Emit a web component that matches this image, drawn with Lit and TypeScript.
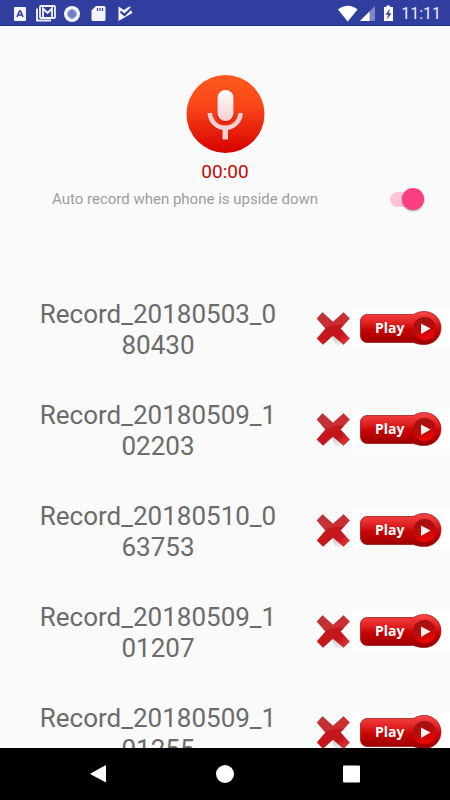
import { LitElement, html, css } from "lit";
import { customElement, property, state } from "lit/decorators.js";

@customElement("status-bar")
class StatusBar extends LitElement {
  static styles = css`
    :host {
      display: flex;
      align-items: center;
      justify-content: space-between;
      box-sizing: border-box;
      height: 26px;
      padding: 0 9px 0 10px;
      background: #303f9f;
      border-bottom: 1px solid #1d2b8c;
      color: #e9ebf6;
      font: 16px/24px Roboto, sans-serif;
    }
    .group { display: flex; align-items: center; }
    svg { display: block; }
    .time { margin-left: 6px; padding-top: 2px; }
  `;
  render() {
    return html`
      <div class="group">
        <svg width="130" height="24" viewBox="0 0 130 24" aria-hidden="true">
          <rect x="4" y="6" width="12" height="14" rx="1" fill="#f4f5fb" />
          <path d="M7 16 L9.5 10 H10.5 L13 16 M8 14 H12" fill="none" stroke="#303f9f" stroke-width="1.5" />
          <path d="M27 7.500 V19.500 H41" fill="none" stroke="#e9ebf6" stroke-width="2" />
          <rect x="30" y="5" width="15" height="12" rx="1" fill="none" stroke="#f4f5fb" stroke-width="1.800" />
          <path d="M33 17 V7.500 L37.500 12 L42 7.500 V17" fill="none" stroke="#f4f5fb" stroke-width="1.800" />
          <circle cx="62" cy="13" r="8" fill="#f4f5fb" />
          <circle cx="62" cy="13" r="4.500" fill="#7480c4" stroke="#a9b1dd" stroke-width="1" />
          <path d="M86 5 H94 a1.500 1.500 0 0 1 1.500 1.500 V18.500 a1.500 1.500 0 0 1 -1.500 1.500 H83 a1.500 1.500 0 0 1 -1.500 -1.500 V9.500 Z" fill="#f4f5fb" />
          <path d="M87.500 7 V10 M90 7 V10 M92.500 7 V10" stroke="#303f9f" stroke-width="1.200" />
          <path d="M108.500 5.500 L114 9 L119 5.500 L122.500 12 L108.500 20 Z" fill="#f4f5fb" />
          <path d="M110.500 10.500 L114.500 14 L122 6.500" fill="none" stroke="#303f9f" stroke-width="2.200" />
          <path d="M114.500 11.500 L121 5.500" stroke="#f4f5fb" stroke-width="1" />
        </svg>
      </div>
      <div class="group">
        <svg width="58" height="24" viewBox="0 0 58 24" aria-hidden="true">
          <path d="M1 8.500 Q11 1 20.500 8.500 L10.750 20.500 Z" fill="#fff" />
          <path d="M38 5 V20 H23 Z" fill="#7e88c5" />
          <path d="M32.500 10.500 V20 H23 Z" fill="#fff" />
          <path d="M49.500 4.500 H53 V6 H56 V20 H47 V6 H49.500 Z" fill="#fff" />
          <path d="M52.500 8.500 L49 13.500 H51.500 L50.500 17.500 L54 12.500 H51.500 Z" fill="#303f9f" stroke="#303f9f" stroke-width="0.500" />
        </svg>
        <span class="time">11:11</span>
      </div>
    `;
  }
}

@customElement("record-row")
class RecordRow extends LitElement {
  @property() name = "";
  static styles = css`
    :host {
      display: flex;
      align-items: center;
      height: 101px;
      flex: none;
    }
    .name {
      flex: 1;
      padding: 4px 36px 0;
      color: #6b6b6b;
      font: 26px/31px Roboto, sans-serif;
      text-align: center;
      word-break: break-all;
    }
    button {
      display: block;
      flex: none;
      padding: 0;
      border: 0;
      background: none;
      cursor: pointer;
    }
    svg { display: block; }
    .play {
      position: relative;
      width: 98px;
      height: 40px;
      background: #fff;
    }
    .label {
      position: absolute;
      left: 23px;
      top: 10px;
      color: #fff;
      font: bold 14px/20px "Open Sans", sans-serif;
    }
  `;
  render() {
    return html`
      <div class="name">${this.name}</div>
      <button class="delete" aria-label="Delete ${this.name}">
        <svg width="36" height="40" viewBox="0 0 36 40" aria-hidden="true">
          <defs>
            <linearGradient id="cross" gradientUnits="userSpaceOnUse" x1="6" y1="5" x2="32" y2="36">
              <stop offset="0" stop-color="#b51d20" />
              <stop offset="0.400" stop-color="#c4181c" />
              <stop offset="0.700" stop-color="#c4141a" />
              <stop offset="1" stop-color="#ea3a3c" />
            </linearGradient>
            <linearGradient id="shadow" x1="0" y1="0" x2="0" y2="1">
              <stop offset="0" stop-color="#bdbdbd" />
              <stop offset="1" stop-color="#f2f2f2" />
            </linearGradient>
            <clipPath id="shape">
              <path d="M6.500 4.500 L17 14 L27.500 4.500 L33.500 10.500 L24.500 20.500 L33.500 30.500 L27.500 36.500 L17 27.500 L7 36.500 L1 30.500 L9.500 20.500 L1 10.500 Z" />
            </clipPath>
          </defs>
          <path d="M15 26 L20 25 L27 34 L23 38 L19 37 Z" fill="url(#shadow)" />
          <g clip-path="url(#shape)">
            <rect width="36" height="40" fill="url(#cross)" />
            <path d="M0 0 H36 V14 Q28 17 19 17 Q12 18 0 24 Z" fill="#fff" opacity="0.100" />
          </g>
          <path d="M6.500 4.500 L17 14 L27.500 4.500 L33.500 10.500 L24.500 20.500 L33.500 30.500 L27.500 36.500 L17 27.500 L7 36.500 L1 30.500 L9.500 20.500 L1 10.500 Z" fill="none" stroke="#a31418" stroke-width="0.600" opacity="0.700" />
        </svg>
      </button>
      <button class="play" aria-label="Play ${this.name}">
        <svg width="98" height="40" viewBox="0 0 98 40" aria-hidden="true">
          <defs>
            <linearGradient id="body" x1="0" y1="0" x2="0" y2="1">
              <stop offset="0" stop-color="#f84848" />
              <stop offset="0.350" stop-color="#e02020" />
              <stop offset="0.550" stop-color="#c80404" />
              <stop offset="1" stop-color="#960000" />
            </linearGradient>
            <linearGradient id="disc" x1="0.300" y1="0" x2="0.600" y2="1">
              <stop offset="0" stop-color="#a01212" />
              <stop offset="0.500" stop-color="#b80c0c" />
              <stop offset="1" stop-color="#f40404" />
            </linearGradient>
          </defs>
          <path
            d="M15 6.500 H60 C64 6.500 64 3.500 72.500 3.500 A16.500 16.500 0 0 1 72.500 36.500 C64 36.500 64 34.500 60 34.500 H15 A6.500 6.500 0 0 1 8.500 28 V13 A6.500 6.500 0 0 1 15 6.500 Z"
            fill="url(#body)" stroke="#980a0a" stroke-width="1" stroke-opacity="0.700"
          />
          <circle cx="72.500" cy="20.500" r="11.500" fill="url(#disc)" />
          <path d="M69 15.500 L78.500 20.500 L69 26 Z" fill="#fff0f0" />
        </svg>
        <span class="label">Play</span>
      </button>
    `;
  }
}

@customElement("app-root")
class AppRoot extends LitElement {
  @state() private auto = true;
  private records = [
    "Record_20180503_080430",
    "Record_20180509_102203",
    "Record_20180510_063753",
    "Record_20180509_101207",
    "Record_20180509_101255",
  ];
  static styles = css`
    :host {
      display: flex;
      flex-direction: column;
      height: 100vh;
      background: #fafafa;
      font-family: Roboto, sans-serif;
    }
    status-bar { flex: none; }
    button { padding: 0; border: 0; background: none; cursor: pointer; }
    svg { display: block; }
    .recorder {
      display: flex;
      flex-direction: column;
      align-items: center;
      flex: none;
      padding-top: 48px;
    }
    .time { margin-top: 6px; color: #c40808; font-size: 19px; line-height: 24px; }
    .auto {
      display: flex;
      align-items: center;
      justify-content: space-between;
      align-self: stretch;
      height: 30px;
      padding: 0 26px 0 52px;
      color: #9d9d9d;
      font-size: 15px;
    }
    .switch {
      appearance: none;
      display: flex;
      align-items: center;
      justify-content: flex-end;
      width: 34px;
      height: 15px;
      margin: 0;
      border-radius: 8px;
      background: #fcc5d7;
    }
    .switch::before {
      content: "";
      width: 22px;
      height: 22px;
      flex: none;
      border-radius: 50%;
      background: #fc3f80;
      box-shadow: 0 1px 2px #0006;
    }
    .switch:not(:checked) { justify-content: flex-start; background: #bbb; }
    .switch:not(:checked)::before { background: #f1f1f1; }
    .list {
      display: flex;
      flex-direction: column;
      flex: 1;
      min-height: 0;
      margin-top: 63px;
      overflow: hidden;
    }
    .nav {
      display: flex;
      flex: none;
      align-items: center;
      justify-content: space-between;
      height: 52px;
      padding: 0 86px;
      background: #000;
    }
  `;
  render() {
    return html`
      <status-bar></status-bar>
      <section class="recorder">
        <button aria-label="Record">
          <svg width="80" height="80" viewBox="0 0 80 80" aria-hidden="true">
            <defs>
              <linearGradient id="disc" x1="0" y1="0" x2="0" y2="1">
                <stop offset="0" stop-color="#ff5a1f" />
                <stop offset="0.400" stop-color="#fa4618" />
                <stop offset="1" stop-color="#d60000" />
              </linearGradient>
              <linearGradient id="mic" x1="0" y1="0" x2="0" y2="1">
                <stop offset="0" stop-color="#ffffff" />
                <stop offset="1" stop-color="#f6cfcf" />
              </linearGradient>
            </defs>
            <circle cx="40.500" cy="40" r="39" fill="url(#disc)" />
            <g fill="#a80000" opacity="0.350" transform="translate(0 1)">
              <rect x="32" y="16" width="17" height="32" rx="8.500" />
              <path d="M22.500 39 H27 C28 47 33.500 51.500 40 51.500 C47 51.500 52.500 47 53.500 39 H58 C57.500 48 51.500 54.500 43 56 V65.500 H37.500 V56 C29 54.500 23 48 22.500 39 Z" />
            </g>
            <path d="M22.500 39 H27 C28 47 33.500 51.500 40 51.500 C47 51.500 52.500 47 53.500 39 H58 C57.500 48 51.500 54.500 43 56 V65.500 H37.500 V56 C29 54.500 23 48 22.500 39 Z" fill="#f4d0d0" />
            <rect x="32.500" y="16" width="16" height="31" rx="8" fill="url(#mic)" />
          </svg>
        </button>
        <div class="time">00:00</div>
        <div class="auto">
          <label for="auto">Auto record when phone is upside down</label>
          <input
            id="auto" class="switch" type="checkbox" role="switch"
            .checked=${this.auto}
            @change=${(e: Event) => (this.auto = (e.target as HTMLInputElement).checked)}
          />
        </div>
      </section>
      <main class="list">
        ${this.records.map((r) => html`<record-row .name=${r}></record-row>`)}
      </main>
      <nav class="nav">
        <button aria-label="Back">
          <svg width="24" height="24" viewBox="0 0 24 24"><path d="M4.500 11.500 L19 3.500 Q20 3 20 4 V19.500 Q20 20.500 19 20 L5 12.500 Q4 12 4.500 11.500 Z" fill="#fff" /></svg>
        </button>
        <button aria-label="Home">
          <svg width="24" height="24" viewBox="0 0 24 24"><circle cx="12" cy="12" r="9" fill="#fff" /></svg>
        </button>
        <button aria-label="Recent apps">
          <svg width="24" height="24" viewBox="0 0 24 24"><rect x="3" y="3.500" width="17" height="17" rx="1" fill="#fff" /></svg>
        </button>
      </nav>
    `;
  }
}
